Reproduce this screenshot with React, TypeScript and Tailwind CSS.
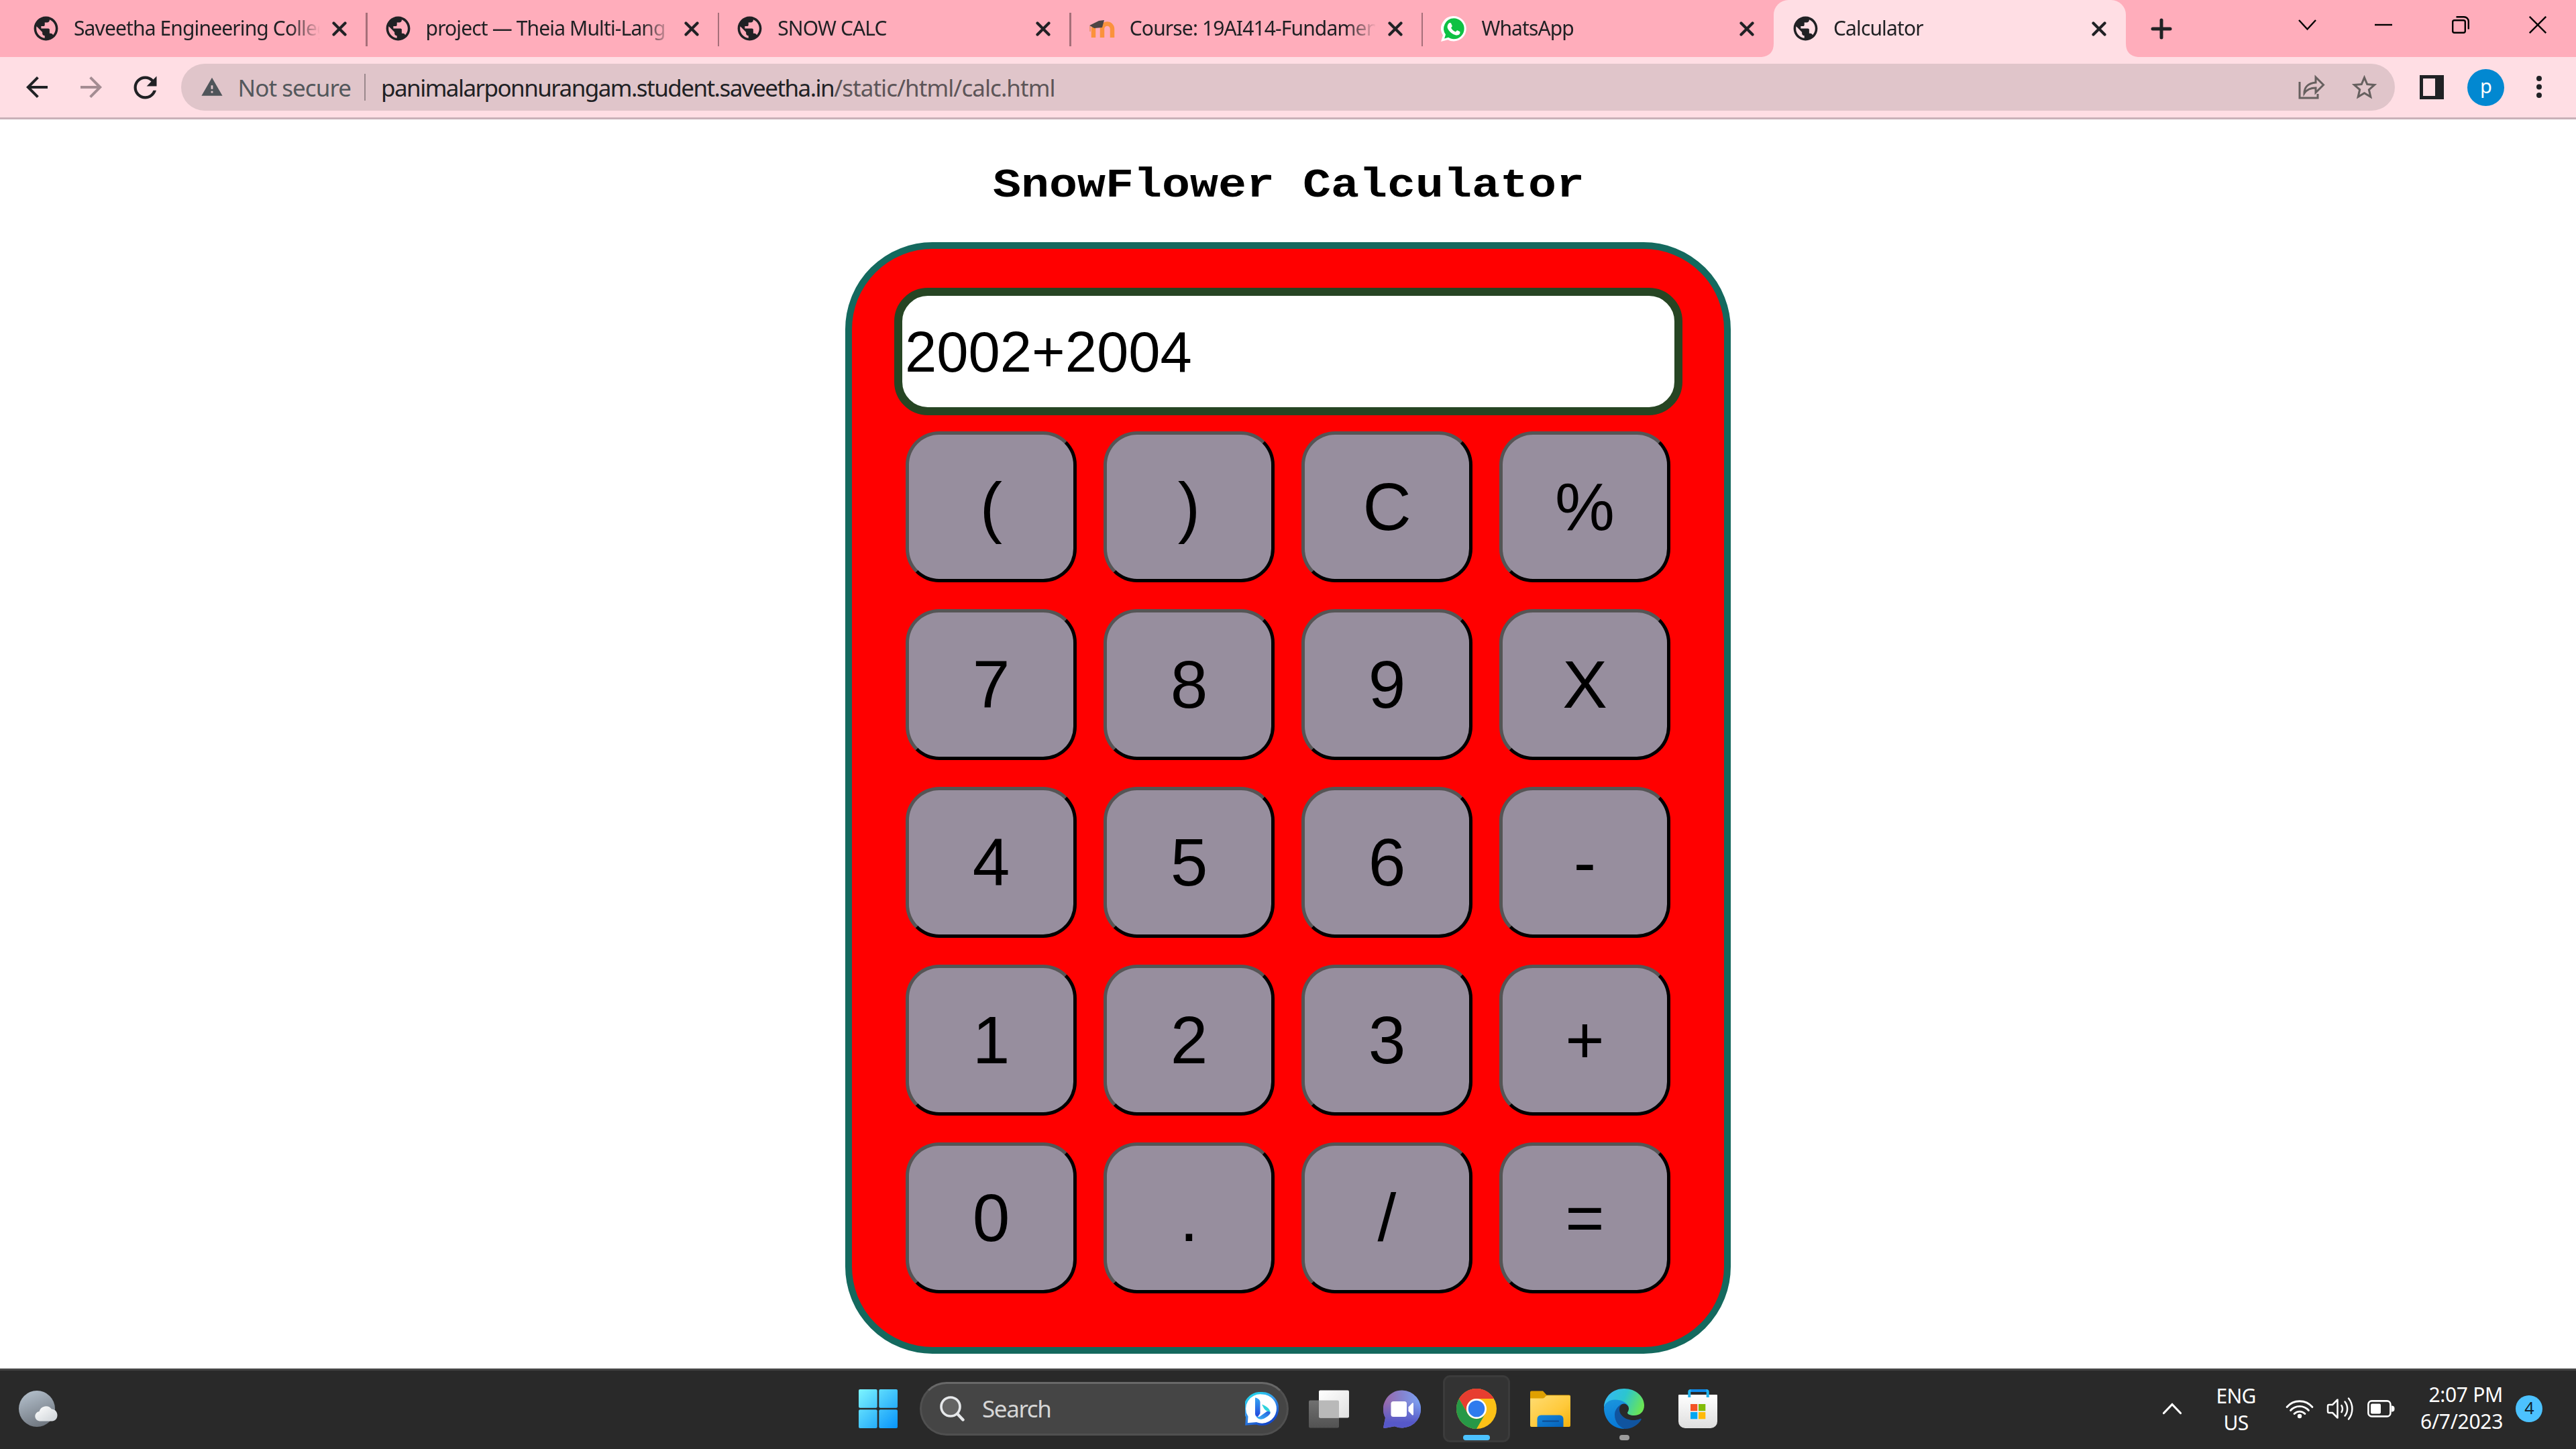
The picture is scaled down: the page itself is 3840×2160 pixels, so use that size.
import React from "react";
import {
  MdPublic,
  MdArrowBack,
  MdArrowForward,
  MdRefresh,
  MdWarning,
  MdStarOutline,
} from "react-icons/md";

function CloseIcon() {
  return (
    <svg className="block h-[22px] w-[22px]" viewBox="0 0 22 22" stroke="#202124" strokeWidth="4.2" strokeLinecap="round">
      <path d="M2.5 2.5 19.5 19.5M19.5 2.5 2.5 19.5" />
    </svg>
  );
}

function Globe() {
  return <MdPublic className="block h-[43px] w-[43px] text-[#202124]" />;
}

function MoodleIcon() {
  return (
    <svg className="block h-[40px] w-[40px]" viewBox="0 0 40 40" fill="none">
      <path d="M8 33V20a5.5 5.5 0 0 1 13 0v13M21 33V20a6.5 6.5 0 0 1 15 0v13" stroke="#fb923c" strokeWidth="6.5" />
      <path d="M2 15 16 8l8-1-3 11-12 1-5-3z" fill="#4d4545" />
      <path d="M3 16v8" stroke="#e9905f" strokeWidth="1.5" />
    </svg>
  );
}

function WhatsAppIcon() {
  return (
    <svg className="block h-[38px] w-[38px]" viewBox="0 0 38 38">
      <path d="M19 0a18.500 18.500 0 0 1 0 37.500c-3.500 0-6-.8-8.600-2.200L0 38l3-9.500A18.500 18.500 0 0 1 19 0z" fill="#fff" />
      <path d="M19.200 3.300a15.400 15.400 0 0 1 0 30.900c-3 0-5.800-.9-8.100-2.400l-6 1.700 1.900-5.900A15.400 15.400 0 0 1 19.200 3.300z" fill="#0ec143" />
      <path d="M13 10c.9-.2 1.800 0 2.200.9l1.500 3.500c.3 1-.9 2.200-1.600 3 1.500 3 3.800 4.900 6.900 6.100.8-.8 1.500-2.300 2.500-2.200l3.500 1.800c.8.500.5 2.300 0 3.200-1 1.800-3.500 2.600-5.500 2.100-6-1.400-10.600-5.400-12.600-10.400-1-3 .6-7 3.100-8z" fill="#fff" />
    </svg>
  );
}

type TabInfo = { title: string; icon: React.ReactNode; active?: boolean };

const tabs: TabInfo[] = [
  { title: "Saveetha Engineering Colleg", icon: <Globe /> },
  { title: "project — Theia Multi-Lang", icon: <Globe /> },
  { title: "SNOW CALC", icon: <Globe /> },
  { title: "Course: 19AI414-Fundamen", icon: <MoodleIcon /> },
  { title: "WhatsApp", icon: <WhatsAppIcon /> },
  { title: "Calculator", icon: <Globe />, active: true },
];

function Tab({ title, icon, active }: TabInfo) {
  return (
    <div className={`relative flex h-[85px] w-[524.6px] shrink-0 items-center ${active ? "rounded-t-[22px] bg-[#ffdee4]" : ""}`}>
      {active && (
        <>
          <svg className="absolute bottom-0 -left-[18px] h-[20px] w-[19px]" viewBox="0 0 19 20">
            <path d="M0 20Q18 18 18 0h1v20z" fill="#ffdee4" />
          </svg>
          <svg className="absolute -right-[18px] bottom-0 h-[20px] w-[19px]" viewBox="0 0 19 20">
            <path d="M19 20Q1 18 1 0H0v20z" fill="#ffdee4" />
          </svg>
        </>
      )}
      <div className="ml-[26px] flex w-[43px] items-center justify-center">{icon}</div>
      <div className="ml-[20px] h-[46px] w-[366px] overflow-hidden text-[30px] leading-[44px] tracking-[-0.029em] whitespace-nowrap text-[#202124] [mask-image:linear-gradient(to_right,black_322px,transparent_368px)]">
        {title}
      </div>
      <div className="ml-[19px]">
        <CloseIcon />
      </div>
    </div>
  );
}

function TabStrip() {
  return (
    <div className="flex h-[85px] items-center bg-[#ffadbb]">
      <div className="flex pl-[21px]">
        {tabs.map((t, i) => (
          <div key={t.title} className="relative flex items-center">
            <Tab {...t} />
            {i < 4 && <div className="absolute top-[19px] right-[-2px] h-[50px] w-[2.5px] bg-[#a66f79]" />}
          </div>
        ))}
      </div>
      <svg className="ml-[37px] h-[32px] w-[32px]" viewBox="0 0 32 32" stroke="#202124" strokeWidth="5" strokeLinecap="round">
        <path d="M16 3v26M3 16h26" />
      </svg>
      <div className="ml-auto flex items-center pr-[44px] pb-[12px]">
        <svg className="h-[26px] w-[27px]" viewBox="0 0 27 26" fill="none" stroke="#000" strokeWidth="2.4">
          <path d="m1 6 12.500 13.500L26 6" />
        </svg>
        <svg className="ml-[87px] h-[26px] w-[26px]" viewBox="0 0 26 26" stroke="#000" strokeWidth="2.4">
          <path d="M0 13h26" />
        </svg>
        <svg className="ml-[89px] h-[26px] w-[26px]" viewBox="0 0 26 26" fill="none" stroke="#000" strokeWidth="2.4">
          <rect x="1.200" y="6.200" width="18.600" height="18.600" rx="2.500" />
          <path d="M6.500 1.200H18a6.800 6.800 0 0 1 6.800 6.800v11.500" />
        </svg>
        <svg className="ml-[89px] h-[26px] w-[26px]" viewBox="0 0 26 26" stroke="#000" strokeWidth="2.4">
          <path d="m.8.8 24.400 24.400M25.200.8.8 25.200" />
        </svg>
      </div>
    </div>
  );
}

function Toolbar() {
  return (
    <div className="flex h-[93px] items-center border-b-[3px] border-[#c9b1b8] bg-[#ffdee4] text-[35px] leading-none tracking-[-0.027em] whitespace-nowrap">
      <MdArrowBack className="ml-[31px] h-[48px] w-[48px] text-[#202124]" />
      <MdArrowForward className="ml-[33px] h-[48px] w-[48px] text-[#a38c92]" />
      <MdRefresh className="ml-[31px] h-[51px] w-[51px] text-[#202124]" />
      <div className="ml-[28px] flex h-[70px] w-[3300px] items-center rounded-full bg-[#e0c5ca]">
        <MdWarning className="ml-[28.500px] h-[34px] w-[34px] text-[#50555a]" />
        <div className="ml-[22px] w-[188px] text-[#54585c]">Not secure</div>
        <div className="h-[40px] w-[2.500px] bg-[#9a888c]" />
        <div className="ml-[23px] tracking-[-0.044em] text-[#202124]">
          panimalarponnurangam.student.saveetha.in
          <span className="tracking-[-0.027em] text-[#5d5558]">/static/html/calc.html</span>
        </div>
        <svg className="ml-auto h-[38px] w-[40px]" viewBox="0 0 40 38" fill="none" stroke="#66605f" strokeWidth="3">
          <path d="M2 11v24h27v-6" />
          <path d="M26 4v8C14 13 9 20 9 28c4-6 9-8 17-8v7l11.500-11.500z" />
        </svg>
        <MdStarOutline className="mr-[23px] ml-[36px] h-[45px] w-[45px] text-[#66605f]" />
      </div>
      <svg className="ml-[37px] h-[36px] w-[36px]" viewBox="0 0 36 36">
        <path d="M0 0h36v36H0zM5 5v26h18V5z" fill="#202124" fillRule="evenodd" />
      </svg>
      <div className="ml-[35px] flex h-[55px] w-[55px] items-center justify-center rounded-full bg-[#0288d1] pb-[5px] text-[29px] text-white">p</div>
      <svg className="ml-[47px] h-[36px] w-[10px]" viewBox="0 0 10 36" fill="#202124">
        <circle cx="5" cy="5" r="4" />
        <circle cx="5" cy="17.500" r="4" />
        <circle cx="5" cy="30" r="4" />
      </svg>
    </div>
  );
}

const keys = ["(", ")", "C", "%", "7", "8", "9", "X", "4", "5", "6", "-", "1", "2", "3", "+", "0", ".", "/", "="];

function Calculator() {
  return (
    <main className="flex h-[1862px] flex-col items-center bg-white">
      <h1 className="mt-[57px] h-[80px] origin-[50%_59px] scale-y-[0.88] pl-[2px] font-['Liberation_Mono',monospace] text-[70px] leading-[80px] font-bold whitespace-nowrap text-black">
        SnowFlower Calculator
      </h1>
      <section className="mt-[46px] flex h-[1657px] w-[1320px] flex-col items-center rounded-[130px] border-[10px] border-[#14695e] bg-[#ff0000] pt-[58px] font-['Liberation_Sans',Arial,sans-serif] text-black">
        <div className="flex h-[190px] w-[1175px] items-center rounded-[50px] border-[12px] border-[#264523] bg-white pl-[4.500px] text-[85px] leading-none">
          2002+2004
        </div>
        <div className="mt-[24px] grid grid-cols-4 gap-[40px]">
          {keys.map((k) => (
            <button
              key={k}
              className="flex h-[225px] w-[255px] items-center justify-center rounded-[50px] border-[5px] border-t-[#555555] border-r-black border-b-black border-l-[#555555] bg-[#978e9e] pb-[2px] text-[100px] leading-none"
            >
              {k}
            </button>
          ))}
        </div>
      </section>
    </main>
  );
}

function WeatherIcon() {
  return (
    <svg className="ml-[27px] h-[56px] w-[60px]" viewBox="0 0 60 56">
      <defs>
        <linearGradient id="moon" x1=".2" y1="0" x2=".6" y2="1">
          <stop offset="0" stopColor="#b4c0cc" />
          <stop offset="1" stopColor="#6f767f" />
        </linearGradient>
        <linearGradient id="cloud" x1="0" y1="0" x2="1" y2="1">
          <stop offset="0" stopColor="#fff" />
          <stop offset="1" stopColor="#ccd1d6" />
        </linearGradient>
      </defs>
      <circle cx="28" cy="28" r="27" fill="url(#moon)" />
      <path d="M32 46.500a7.300 7.300 0 0 1-.5-14.500 10.500 10.500 0 0 1 18.500-3.500c4.500.2 8.500 3.800 8.500 9 0 5.500-3.500 9-8 9z" fill="url(#cloud)" />
    </svg>
  );
}

function StartIcon() {
  return (
    <svg className="h-[58px] w-[58px]" viewBox="0 0 58 58">
      <defs>
        <linearGradient id="win" gradientUnits="userSpaceOnUse" x1="0" y1="0" x2="58" y2="58">
          <stop offset="0" stopColor="#7df5ff" />
          <stop offset=".5" stopColor="#42c4fc" />
          <stop offset="1" stopColor="#0794fb" />
        </linearGradient>
      </defs>
      <g fill="url(#win)">
        <rect width="27.700" height="27.700" rx="2" />
        <rect x="30.300" width="27.700" height="27.700" rx="2" />
        <rect y="30.300" width="27.700" height="27.700" rx="2" />
        <rect x="30.300" y="30.300" width="27.700" height="27.700" rx="2" />
      </g>
    </svg>
  );
}

function BingIcon() {
  return (
    <svg className="mr-[12px] ml-auto h-[50px] w-[50px]" viewBox="0 0 50 50">
      <defs>
        <linearGradient id="bingRing" x1="0" y1="0" x2=".6" y2="1">
          <stop offset="0" stopColor="#19e0e8" />
          <stop offset=".5" stopColor="#3a9cf0" />
          <stop offset="1" stopColor="#1448c8" />
        </linearGradient>
        <linearGradient id="bingStem" x1="0" y1="0" x2="0" y2="1">
          <stop offset="0" stopColor="#35a5f2" />
          <stop offset="1" stopColor="#2246dd" />
        </linearGradient>
        <linearGradient id="bingTail" x1="0" y1="1" x2="1" y2="0">
          <stop offset="0" stopColor="#3bbdf5" />
          <stop offset="1" stopColor="#2456dc" />
        </linearGradient>
      </defs>
      <path d="M25 1.700a23.300 23.300 0 1 1-8 45.100L2 48l.8-11A23.300 23.300 0 0 1 25 1.700z" fill="#fff" stroke="url(#bingRing)" strokeWidth="3.400" />
      <path d="M15 8.500c4 .5 7.500 3 7.500 7V32l-3.500 5c-2.500 0-4-2-4-4.500z" fill="url(#bingStem)" />
      <path d="M15.500 34c1 4 5 7.500 9.500 6.500 3 0 11-5 12.500-8.500 1-3-2-5-5-3L22 36.500c-3 1.500-5.500 0-6.500-2.500z" fill="url(#bingTail)" />
      <path d="M25 18.500c7 2.500 13 7 12.700 13.500-.2-2-2-3.500-5-3.500-4-1.500-5.500-6-7.700-10z" fill="#2fd3dc" />
    </svg>
  );
}

function TaskViewIcon() {
  return (
    <svg className="ml-[30px] h-[57px] w-[60px]" viewBox="0 0 60 57">
      <defs>
        <linearGradient id="tvFront" x1="0" y1="0" x2="1" y2="1">
          <stop offset="0" stopColor="#fff" />
          <stop offset="1" stopColor="#e0e0e0" />
        </linearGradient>
        <linearGradient id="tvBack" x1="0" y1="0" x2="0" y2="1">
          <stop offset="0" stopColor="#707070" />
          <stop offset="1" stopColor="#525252" />
        </linearGradient>
      </defs>
      <rect x="0" y="15.500" width="45" height="41" rx="2" fill="url(#tvBack)" />
      <rect x="15" y=".5" width="45" height="41" rx="2" fill="url(#tvFront)" />
      <path d="M15 15.500h28a2 2 0 0 1 2 2v24H17a2 2 0 0 1-2-2z" fill="#b9b9b9" />
    </svg>
  );
}

function ChatIcon() {
  return (
    <svg className="ml-[51px] h-[57px] w-[56px]" viewBox="0 0 56 57">
      <defs>
        <linearGradient id="chatA" x1="0" y1=".2" x2="1" y2=".2">
          <stop offset="0" stopColor="#9a66a8" />
          <stop offset=".5" stopColor="#8583cf" />
          <stop offset="1" stopColor="#7aa2f5" />
        </linearGradient>
        <linearGradient id="chatB" x1="0" y1="0" x2="0" y2="1">
          <stop offset=".3" stopColor="#5b5fc7" stopOpacity="0" />
          <stop offset=".85" stopColor="#5658c8" />
        </linearGradient>
      </defs>
      {["url(#chatA)", "url(#chatB)"].map((f) => (
        <path key={f} d="M28 .5a28 28 0 1 1-11 53.700L2 57c-1.300.2-2-.6-1.700-2L3 41.500A28 28 0 0 1 28 .5z" fill={f} />
      ))}
      <rect x="11.500" y="17" width="23.500" height="23" rx="3.500" fill="#fff" />
      <path d="M37.500 25.500 43 19.800c.9-.9 2-.4 2 .9v15.600c0 1.300-1.100 1.800-2 .9l-5.500-5.700z" fill="#fff" />
    </svg>
  );
}

function ChromeIcon() {
  return (
    <svg className="h-[60px] w-[60px]" viewBox="0 0 60 60">
      <circle cx="30" cy="30" r="30" fill="#fcc116" />
      <path d="M4 15A30 30 0 0 1 56 15H30A15 15 0 0 0 17 37.500z" fill="#e73d30" />
      <path d="M4 15A30 30 0 0 0 30 60L43 37.500A15 15 0 0 1 17 37.500z" fill="#279847" />
      <circle cx="30" cy="30" r="15" fill="#fff" />
      <circle cx="30" cy="30" r="12.300" fill="#2f7bee" />
    </svg>
  );
}

function FolderIcon() {
  return (
    <svg className="ml-[30px] h-[54px] w-[60px]" viewBox="0 0 60 54">
      <defs>
        <linearGradient id="folder" x1="0" y1="0" x2="1" y2="1">
          <stop offset="0" stopColor="#ffdc73" />
          <stop offset=".6" stopColor="#ffc93a" />
          <stop offset="1" stopColor="#f3b00b" />
        </linearGradient>
        <linearGradient id="folderClip" x1="0" y1="0" x2="1" y2="1">
          <stop offset="0" stopColor="#1587da" />
          <stop offset="1" stopColor="#0561ba" />
        </linearGradient>
      </defs>
      <path d="M0 2.500A2 2 0 0 1 2 .500h17l5.500 6H58a2 2 0 0 1 2 2V20H0z" fill="#dfa000" />
      <path d="M0 11.500h19c2.500 0 4-4.300 6.500-4.300H58a2 2 0 0 1 2 2V52a2 2 0 0 1-2 2H2a2 2 0 0 1-2-2z" fill="url(#folder)" />
      <path d="M10.500 54V42a5.500 5.500 0 0 1 5.500-5.500h28a5.500 5.500 0 0 1 5.500 5.500v12z" fill="url(#folderClip)" />
      <path d="M19 45.500h23" stroke="#0c4b91" strokeWidth="2.200" strokeLinecap="round" />
    </svg>
  );
}

function EdgeIcon() {
  return (
    <svg className="h-[60px] w-[60px]" viewBox="0 0 60 60">
      <defs>
        <linearGradient id="edgeTop" x1="0" y1=".2" x2="1" y2=".5">
          <stop offset="0" stopColor="#36b8f5" />
          <stop offset=".5" stopColor="#2cc5d0" />
          <stop offset="1" stopColor="#6ae555" />
        </linearGradient>
        <linearGradient id="edgeMid" x1=".3" y1="0" x2=".5" y2="1">
          <stop offset="0" stopColor="#1a94dd" />
          <stop offset="1" stopColor="#0677d6" />
        </linearGradient>
      </defs>
      <path d="M0 27C1 11 14 0 30 0c18 0 30 12 30 25 0 10-7 15-15 15-6 0-10-2-10-4 0-1 2-2.500 2-6.500 0-5-5-9-11-9z" fill="url(#edgeTop)" />
      <path d="M0 29C0 22 8 16.500 16 16.500c12 0 21 6 21 13 0-3-3-7-7-7-5 0-8 5-8 10L30 60C13 60 0 46 0 29z" fill="url(#edgeMid)" />
      <path d="M26 23c-6 4-10 9-10 16 0 10 6 18 15 21 11 0 20-6 24.500-13.500.6-1.500-.5-2-1.700-1.500C40 51 23 43 23 31c0-3.500 1-6 3-8z" fill="#10549f" />
    </svg>
  );
}

function StoreIcon() {
  return (
    <svg className="ml-[51px] h-[58px] w-[58px]" viewBox="0 0 58 58">
      <defs>
        <linearGradient id="bag" x1="0" y1="0" x2="0" y2="1">
          <stop offset="0" stopColor="#fff" />
          <stop offset="1" stopColor="#dedede" />
        </linearGradient>
      </defs>
      <path d="M0 9a1 1 0 0 1 1-1h56a1 1 0 0 1 1 1v39a10 10 0 0 1-10 10H10A10 10 0 0 1 0 48z" fill="url(#bag)" />
      <path d="M16.300 12V4a2 2 0 0 1 2-2h23.400a2 2 0 0 1 2 2v8" fill="none" stroke="#22b5f0" strokeWidth="4" />
      <path d="M18.500 2h23" stroke="#108bea" strokeWidth="4" />
      <rect x="18" y="22" width="10.300" height="10.300" fill="#f35325" />
      <rect x="30" y="22" width="10.300" height="10.300" fill="#81bc06" />
      <rect x="18" y="34" width="10.300" height="10.300" fill="#05a6f0" />
      <rect x="30" y="34" width="10.300" height="10.300" fill="#ffba08" />
    </svg>
  );
}

function Taskbar() {
  return (
    <div className="flex h-[120px] items-center border-t-[3px] border-[#464646] bg-[#292929] pb-[3px] whitespace-nowrap text-white">
      <div className="w-[1280px]">
        <WeatherIcon />
      </div>
      <StartIcon />
      <div className="ml-[33px] flex h-[80px] w-[550px] items-center rounded-full border-[3px] border-[#505050] border-t-[#686868] bg-[#454545]">
        <svg className="ml-[27px] h-[38px] w-[38px]" viewBox="0 0 38 38" fill="none" stroke="#e6e8ea" strokeLinecap="round">
          <circle cx="16" cy="16" r="14" strokeWidth="3.600" fill="#636363" />
          <path d="m26.500 27 8 8.500" strokeWidth="4.400" />
        </svg>
        <div className="ml-[25px] pb-[2px] text-[35px] leading-none tracking-[-0.04em] text-[#d6d6d6]">Search</div>
        <BingIcon />
      </div>
      <TaskViewIcon />
      <ChatIcon />
      <div className="relative ml-[33px] flex h-[100px] w-[100px] items-center justify-center rounded-[11px] border-[3px] border-[#3b3b3b] bg-[#333333]">
        <ChromeIcon />
        <div className="absolute bottom-0 left-[27px] h-[8px] w-[40px] rounded-full bg-[#4cc2ff]" />
      </div>
      <FolderIcon />
      <div className="relative ml-[50px]">
        <EdgeIcon />
        <div className="absolute -bottom-[17px] left-[23px] h-[8px] w-[15px] rounded-full bg-[#9c9c9c]" />
      </div>
      <StoreIcon />
      <div className="ml-auto flex items-center text-[30px] leading-[40px] tracking-[-0.027em]">
        <svg className="h-[18px] w-[30px]" viewBox="0 0 30 18" fill="none" stroke="#fff" strokeWidth="3.200" strokeLinecap="round">
          <path d="M2.500 15.500 15 2.500l12.500 13" />
        </svg>
        <div className="ml-[42px] w-[76px] pt-[2px] text-center">
          <div>ENG</div>
          <div>US</div>
        </div>
        <svg className="ml-[36px] h-[30px] w-[42px]" viewBox="0 0 42 30" fill="none" stroke="#fff" strokeWidth="2.800" strokeLinecap="round">
          <path d="M2 12.500a25 25 0 0 1 38 0M7.500 17.500a18 18 0 0 1 27 0M13 22.500a11 11 0 0 1 16 0" />
          <circle cx="21" cy="26" r="3.200" fill="#fff" stroke="none" />
        </svg>
        <svg className="ml-[19px] h-[36px] w-[42px]" viewBox="0 0 42 36" fill="none" stroke="#fff" strokeWidth="2.500" strokeLinecap="round" strokeLinejoin="round">
          <path d="M2 14a2 2 0 0 1 2-2h5l7.500-7.500v27L9 24H4a2 2 0 0 1-2-2z" />
          <path d="M22.500 13a10 10 0 0 1 0 10M27.500 7.500a17 17 0 0 1 0 21M33 2.500a25 25 0 0 1 0 31" />
        </svg>
        <svg className="ml-[18px] h-[28px] w-[42px]" viewBox="0 0 42 28" fill="none">
          <rect x="2.400" y="2.400" width="33" height="23" rx="5" stroke="#fff" strokeWidth="2.600" />
          <rect x="6" y="6.500" width="15" height="15" rx="2" fill="#fff" />
          <path d="M37 9.500c3 0 4.500 1 4.500 4.500s-1.500 4.500-4.500 4.500z" fill="#fff" />
        </svg>
        <div className="ml-[24px] w-[137px] pb-[2px] text-right tracking-[-0.01em]">
          <div>2:07 PM</div>
          <div>6/7/2023</div>
        </div>
        <div className="mr-[50px] ml-[19px] flex h-[40px] w-[40px] items-center justify-center rounded-full bg-[#4cc2ff] pb-[3px] text-[25px] leading-none text-[#10202c]">4</div>
      </div>
    </div>
  );
}

export default function App() {
  return (
    <div className="flex h-[2160px] w-[3840px] flex-col overflow-hidden bg-white font-['Noto_Sans','Open_Sans',sans-serif]">
      <TabStrip />
      <Toolbar />
      <Calculator />
      <Taskbar />
    </div>
  );
}
